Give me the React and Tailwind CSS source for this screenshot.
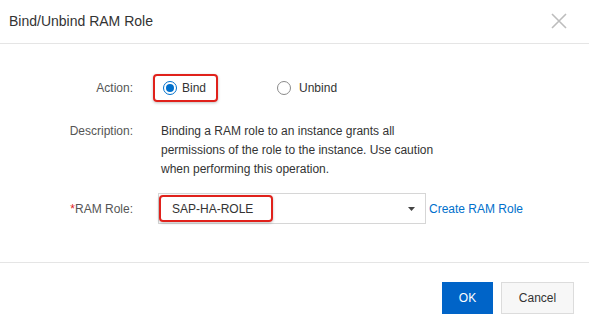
export default function App() {
  return (
    <div className="w-[589px] h-[329px] bg-white flex flex-col text-[12px] text-[#333]" style={{ fontFamily: '"Liberation Sans", Arial, sans-serif' }}>
      <div className="h-[44px] flex items-center justify-between pl-[9px] pr-[22px] border-b border-[#e5e5e5]">
        <span className="text-[14px] text-[#333]">Bind/Unbind RAM Role</span>
        <svg width="16" height="16" viewBox="0 0 16 16" className="-mt-[2px]">
          <path d="M1 1L15 15M15 1L1 15" stroke="#bdbdbd" strokeWidth="1.6" />
        </svg>
      </div>

      <div className="flex-1 flex flex-col pt-[30px]">
        <div className="flex items-center h-[28px]">
          <div className="w-[133px] text-right text-[#555]">Action:</div>
          <div className="flex items-center ml-[20px]">
            <div className="flex items-center gap-[5px] h-[28px] pl-[8px] pr-[10px] border-2 border-[#e0211b] rounded-[4px] shadow-[0_1px_3px_rgba(0,0,0,0.25)]">
              <span className="w-[14px] h-[14px] rounded-full border border-[#0070cc] flex items-center justify-center">
                <span className="w-[8px] h-[8px] rounded-full bg-[#0070cc]" />
              </span>
              <span>Bind</span>
            </div>
            <div className="flex items-center gap-[8px] ml-[59px]">
              <span className="w-[14px] h-[14px] rounded-full border border-[#8a8a8a]" />
              <span>Unbind</span>
            </div>
          </div>
        </div>

        <div className="flex mt-[20px] leading-[19px]">
          <div className="w-[133px] text-right text-[#555]">Description:</div>
          <div className="ml-[28px] w-[296px] text-[#333]">
            Binding a RAM role to an instance grants all permissions of the role to the instance. Use caution when performing this operation.
          </div>
        </div>

        <div className="flex items-center mt-[14px]">
          <div className="w-[133px] text-right text-[#555]">
            <span className="text-[#e0211b]">*</span>RAM Role:
          </div>
          <div className="ml-[25px] w-[268px] h-[31px] border border-[#d6d6d6] flex items-center justify-between pr-[10px]">
            <div className="flex items-center h-[27px] w-[114px] pl-[11px] border-2 border-[#e0211b] rounded-[4px] shadow-[0_1px_3px_rgba(0,0,0,0.25)]">
              SAP-HA-ROLE
            </div>
            <svg width="7" height="4" viewBox="0 0 7 4">
              <path d="M0 0H7L3.5 4Z" fill="#444" />
            </svg>
          </div>
          <a className="ml-[3px] text-[#0070cc]">Create RAM Role</a>
        </div>
      </div>

      <div className="h-[67px] border-t border-[#e5e5e5] flex items-start justify-end gap-[8px] pt-[19px] pr-[15px]">
        <button className="w-[51px] h-[32px] bg-[#0064c8] text-white text-[12px]">OK</button>
        <button className="w-[73px] h-[32px] bg-[#f7f7f7] border border-[#dcdcdc] text-[#333] text-[12px]">Cancel</button>
      </div>
    </div>
  );
}
